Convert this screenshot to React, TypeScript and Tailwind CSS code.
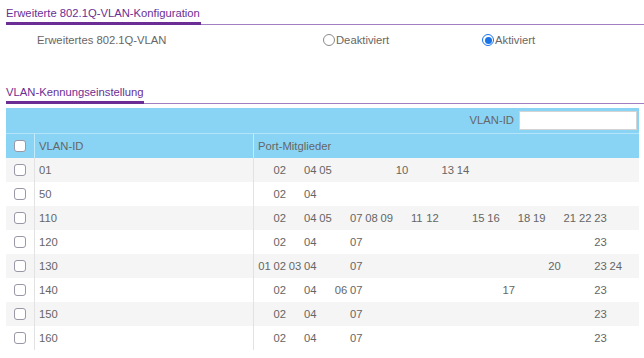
import React from "react";

const rows: { id: string; ports: number[] }[] = [
  { id: "01", ports: [2, 4, 5, 10, 13, 14] },
  { id: "50", ports: [2, 4] },
  { id: "110", ports: [2, 4, 5, 7, 8, 9, 11, 12, 15, 16, 18, 19, 21, 22, 23] },
  { id: "120", ports: [2, 4, 7, 23] },
  { id: "130", ports: [1, 2, 3, 4, 7, 20, 23, 24] },
  { id: "140", ports: [2, 4, 6, 7, 17, 23] },
  { id: "150", ports: [2, 4, 7, 23] },
  { id: "160", ports: [2, 4, 7, 23] },
];

const Box = () => (
  <span className="block w-[12px] h-[12px] rounded-[3px] border border-[#9a97a6] bg-white" />
);

function Section({ title, w }: { title: string; w: string }) {
  return (
    <div className="flex items-end">
      <div className={`pl-[6px] shrink-0`}>
        <div
          className={`${w} pt-[6px] pb-[2px] border-b-[3px] border-[#6b2e94] text-[#6b2e94] leading-[14px] whitespace-nowrap`}
        >
          {title}
        </div>
      </div>
      <div className="flex-1 border-b border-[#a27fc2]" />
    </div>
  );
}

export default function App() {
  return (
    <div
      className="w-[644px] h-[358px] overflow-hidden bg-white text-[11.25px] text-[#666]"
      style={{ fontFamily: '"Liberation Sans", Arial, sans-serif' }}
    >
      <Section title="Erweiterte 802.1Q-VLAN-Konfiguration" w="w-[195px]" />
      <div className="flex items-center mt-[8px] h-[14px] leading-[14px]">
        <div className="pl-[37px] w-[323px] shrink-0">Erweitertes 802.1Q-VLAN</div>
        <div className="w-[159px] shrink-0 flex items-center">
          <span className="block w-[12px] h-[12px] rounded-full border border-[#8a8a8a] bg-white" />
          <span className="ml-[1px]">Deaktiviert</span>
        </div>
        <div className="flex items-center">
          <span className="flex items-center justify-center w-[12px] h-[12px] rounded-full border border-[#1a73e8] bg-white">
            <span className="block w-[7px] h-[7px] rounded-full bg-[#1a73e8]" />
          </span>
          <span className="ml-[1px]">Aktiviert</span>
        </div>
      </div>
      <div className="mt-[32px]">
        <Section title="VLAN-Kennungseinstellung" w="w-[138px]" />
      </div>
      <div className="ml-[6px] mr-[5px] mt-[4px]">
        <div className="h-[26px] bg-[#89d4f5] flex items-center justify-end pr-[2px] border-b border-[#b5e3f8]">
          <span className="mr-[5px]">VLAN-ID</span>
          <span className="block w-[118px] h-[19px] bg-white border border-[#d4d4d4]" />
        </div>
        <div className="h-[24px] bg-[#89d4f5] flex items-center">
          <div className="w-[29px] h-full flex items-center justify-center border-r border-[#c4ebfb]">
            <Box />
          </div>
          <div className="w-[219px] h-full flex items-center pl-[4px] border-r border-[#c4ebfb]">
            VLAN-ID
          </div>
          <div className="pl-[4px]">Port-Mitglieder</div>
        </div>
        {rows.map((r, i) => (
          <div
            key={r.id}
            className={`h-[24px] flex items-center ${i % 2 === 0 ? "bg-[#f5f5f5]" : "bg-white"}`}
          >
            <div className="w-[29px] h-full flex items-center justify-center border-r border-[#e2e2e2]">
              <Box />
            </div>
            <div className="w-[219px] h-full flex items-center pl-[4px] border-r border-[#e2e2e2]">
              {r.id}
            </div>
            <div className="flex pl-[4.3px]">
              {Array.from({ length: 24 }, (_, k) => k + 1).map((n) => (
                <span key={n} className="w-[15.27px] shrink-0 whitespace-nowrap">
                  {r.ports.includes(n) ? String(n).padStart(2, "0") : ""}
                </span>
              ))}
            </div>
          </div>
        ))}
      </div>
    </div>
  );
}
